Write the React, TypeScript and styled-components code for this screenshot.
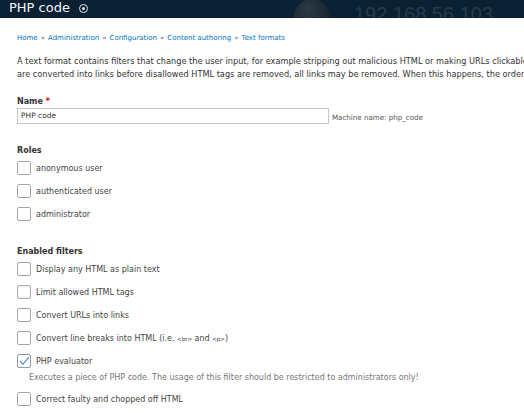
import React from 'react';
import styled, { createGlobalStyle } from 'styled-components';

const GlobalStyle = createGlobalStyle`
  html, body {
    margin: 0;
    padding: 0;
    background: #ffffff;
    overflow: hidden;
  }
  body {
    font-family: "DejaVu Sans", Verdana, sans-serif;
    color: #333333;
  }
`;

const Page = styled.div`
  width: 524px;
  height: 413px;
  overflow: hidden;
`;

const Header = styled.header`
  position: relative;
  display: flex;
  align-items: center;
  height: 18px;
  padding: 0 9px;
  background-color: #0a2133;
  overflow: hidden;
`;

const Title = styled.h1`
  margin: 0;
  font-size: 13px;
  font-weight: normal;
  color: #f4f6f8;
  line-height: 18px;
  margin-top: -2px;
`;

const Shortcut = styled.span`
  display: inline-flex;
  align-items: center;
  justify-content: center;
  width: 7px;
  height: 7px;
  margin-left: 9px;
  margin-top: -1px;
  border: 1px solid #e4e8ec;
  border-radius: 50%;

  &::after {
    content: '';
    width: 3px;
    height: 3px;
    border-radius: 50%;
    background: #e4e8ec;
  }
`;

const Watermark = styled.div`
  position: absolute;
  left: 294px;
  top: 0;
  display: flex;
  align-items: flex-start;
  gap: 24px;
  pointer-events: none;
`;

const Orb = styled.div`
  width: 36px;
  height: 36px;
  margin-top: -1px;
  border-radius: 50%;
  background: radial-gradient(circle at 40% 30%, #2c3a44 0%, #1a2831 60%, #0f1d27 100%);
`;

const Address = styled.span`
  font-family: "Liberation Sans", Arial, sans-serif;
  font-size: 20px;
  line-height: 20px;
  margin-top: 4px;
  color: #263b4b;
  white-space: nowrap;
`;

const Content = styled.main`
  padding: 14px 17px 0 17px;
`;

const Breadcrumb = styled.nav`
  font-size: 7px;
  color: #0074bd;
  white-space: nowrap;
  line-height: 12px;
`;

const Crumb = styled.a`
  color: #0074bd;
  text-decoration: none;
`;

const Sep = styled.span`
  color: #666666;
  margin: 0 3px;
`;

const Intro = styled.p`
  margin: 11px 0 0 0;
  width: 640px;
  font-size: 8.2px;
  line-height: 13px;
  color: #333333;
  white-space: nowrap;
`;

const Field = styled.div`
  margin-top: 15px;
`;

const FieldLabel = styled.div`
  font-size: 8px;
  font-weight: bold;
  color: #333333;
  line-height: 12px;
`;

const Required = styled.span`
  color: #e00000;
  margin-left: 3px;
`;

const InputRow = styled.div`
  display: flex;
  align-items: center;
  gap: 3px;
`;

const TextInput = styled.div`
  box-sizing: border-box;
  width: 312px;
  height: 16px;
  padding: 0 3px;
  border: 1px solid #c4c4c4;
  font-size: 7.5px;
  line-height: 14px;
  color: #333333;
`;

const Machine = styled.span`
  font-size: 7.1px;
  color: #555555;
  margin-top: 2px;
`;

const Group = styled.section<{ $top: number }>`
  margin-top: ${(p) => p.$top}px;
`;

const GroupTitle = styled.h3`
  margin: 0 0 4px 0;
  font-size: 8px;
  font-weight: bold;
  color: #333333;
  line-height: 12px;
`;

const Option = styled.label`
  display: flex;
  align-items: center;
  gap: 5px;
  height: 14px;
  margin-bottom: 9px;
`;

const Box = styled.span<{ $checked?: boolean }>`
  box-sizing: border-box;
  display: inline-flex;
  align-items: center;
  justify-content: center;
  width: 14px;
  height: 14px;
  border: 1px solid ${(p) => (p.$checked ? '#8c9aa8' : '#a6a6a6')};
  border-radius: 2px;
  background: #ffffff;
`;

const OptionText = styled.span`
  font-size: 8px;
  color: #444444;
  white-space: nowrap;
`;

const Tag = styled.span`
  font-size: 5.5px;
`;

const OptionHelp = styled.div`
  margin: -5px 0 9px 12px;
  font-size: 8px;
  line-height: 11px;
  color: #777777;
  white-space: nowrap;
`;

const Check = () => (
  <svg width="11" height="10" viewBox="0 0 11 10">
    <path d="M1 5.2 L4 8.2 L10 1.2" fill="none" stroke="#3b8fd6" strokeWidth="1.1" />
  </svg>
);

const roles = ['anonymous user', 'authenticated user', 'administrator'];

export default function App() {
  return (
    <Page>
      <GlobalStyle />
      <Header>
        <Title>PHP code</Title>
        <Shortcut />
        <Watermark>
          <Orb />
          <Address>192.168.56.103</Address>
        </Watermark>
      </Header>
      <Content>
        <Breadcrumb>
          <Crumb>Home</Crumb>
          <Sep>»</Sep>
          <Crumb>Administration</Crumb>
          <Sep>»</Sep>
          <Crumb>Configuration</Crumb>
          <Sep>»</Sep>
          <Crumb>Content authoring</Crumb>
          <Sep>»</Sep>
          <Crumb>Text formats</Crumb>
        </Breadcrumb>
        <Intro>
          A text format contains filters that change the user input, for example stripping out malicious HTML or making URLs clickable. Filters are executed from top to bottom and the order is important, since one filter may prevent another filter from doing its job. For example, when URLs
          <br />
          are converted into links before disallowed HTML tags are removed, all links may be removed. When this happens, the order of filters may need to be re-arranged.
        </Intro>
        <Field>
          <FieldLabel>
            Name<Required>*</Required>
          </FieldLabel>
          <InputRow>
            <TextInput>PHP code</TextInput>
            <Machine>Machine name: php_code</Machine>
          </InputRow>
        </Field>
        <Group $top={21}>
          <GroupTitle>Roles</GroupTitle>
          {roles.map((r) => (
            <Option key={r}>
              <Box />
              <OptionText>{r}</OptionText>
            </Option>
          ))}
        </Group>
        <Group $top={25}>
          <GroupTitle>Enabled filters</GroupTitle>
          <Option>
            <Box />
            <OptionText>Display any HTML as plain text</OptionText>
          </Option>
          <Option>
            <Box />
            <OptionText>Limit allowed HTML tags</OptionText>
          </Option>
          <Option>
            <Box />
            <OptionText>Convert URLs into links</OptionText>
          </Option>
          <Option>
            <Box />
            <OptionText>
              Convert line breaks into HTML (i.e. <Tag>&lt;br&gt;</Tag> and <Tag>&lt;p&gt;</Tag>)
            </OptionText>
          </Option>
          <Option>
            <Box $checked>
              <Check />
            </Box>
            <OptionText>PHP evaluator</OptionText>
          </Option>
          <OptionHelp>
            Executes a piece of PHP code. The usage of this filter should be restricted to administrators only!
          </OptionHelp>
          <Option>
            <Box />
            <OptionText>Correct faulty and chopped off HTML</OptionText>
          </Option>
        </Group>
      </Content>
    </Page>
  );
}
